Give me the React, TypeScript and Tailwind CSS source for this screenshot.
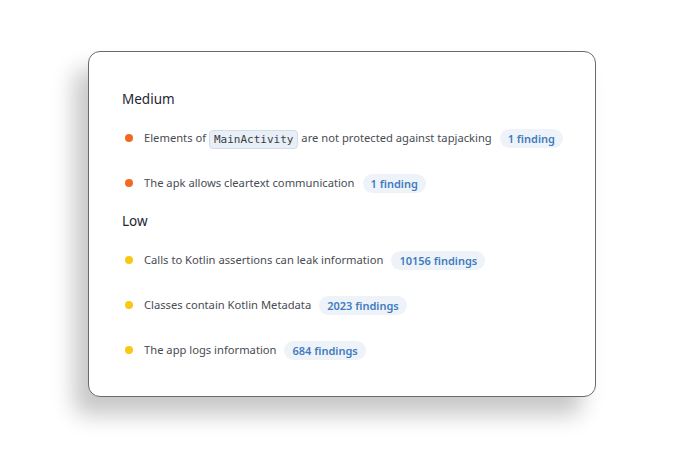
import React from "react";

type Finding = {
  label: React.ReactNode;
  count: string;
};

type Group = {
  title: string;
  dot: string;
  items: Finding[];
};

const groups: Group[] = [
  {
    title: "Medium",
    dot: "bg-[#f26a21]",
    items: [
      {
        label: (
          <>
            Elements of{" "}
            <code className="inline-block h-[19px] rounded-[4px] border border-[#d3dde8] bg-[#e9eff6] px-[4px] align-middle font-['DejaVu_Sans_Mono',monospace] text-[11px] leading-[17px] text-[#3a3f47]">
              MainActivity
            </code>{" "}
            are not protected against tapjacking
          </>
        ),
        count: "1 finding",
      },
      { label: "The apk allows cleartext communication", count: "1 finding" },
    ],
  },
  {
    title: "Low",
    dot: "bg-[#f7c814]",
    items: [
      { label: "Calls to Kotlin assertions can leak information", count: "10156 findings" },
      { label: "Classes contain Kotlin Metadata", count: "2023 findings" },
      { label: "The app logs information", count: "684 findings" },
    ],
  },
];

const Row = ({ item, dot }: { item: Finding; dot: string }) => (
  <li className="flex h-6 items-center whitespace-nowrap">
    <span className={`ml-[3px] h-2 w-2 shrink-0 rounded-full ${dot}`} />
    <span className="ml-[11px] text-[11.2px] leading-6 text-[#474c54]">{item.label}</span>
    <span className="ml-2 rounded-full bg-[#eef3fa] px-2 text-[11px] font-semibold leading-[19px] text-[#3f7bbd]">
      {item.count}
    </span>
  </li>
);

export default function App() {
  return (
    <div className="min-h-[461px] bg-white pl-[88px] pt-[51px] font-['Noto_Sans',sans-serif]">
      <div className="h-[346px] w-[508px] rounded-[12px] border-[1.5px] border-[#6a6a6a] bg-white pl-[33px] pt-[36px] shadow-[-14px_18px_22px_rgba(0,0,0,0.22)]">
        {groups.map((group, gi) => (
          <section key={group.title} className={gi > 0 ? "mt-[15px]" : ""}>
            <h2 className="text-[13.5px] font-normal leading-[22px] text-[#1f2633]">{group.title}</h2>
            <ul className="mt-4 flex flex-col gap-[21px]">
              {group.items.map((item, i) => (
                <Row key={i} item={item} dot={group.dot} />
              ))}
            </ul>
          </section>
        ))}
      </div>
    </div>
  );
}
